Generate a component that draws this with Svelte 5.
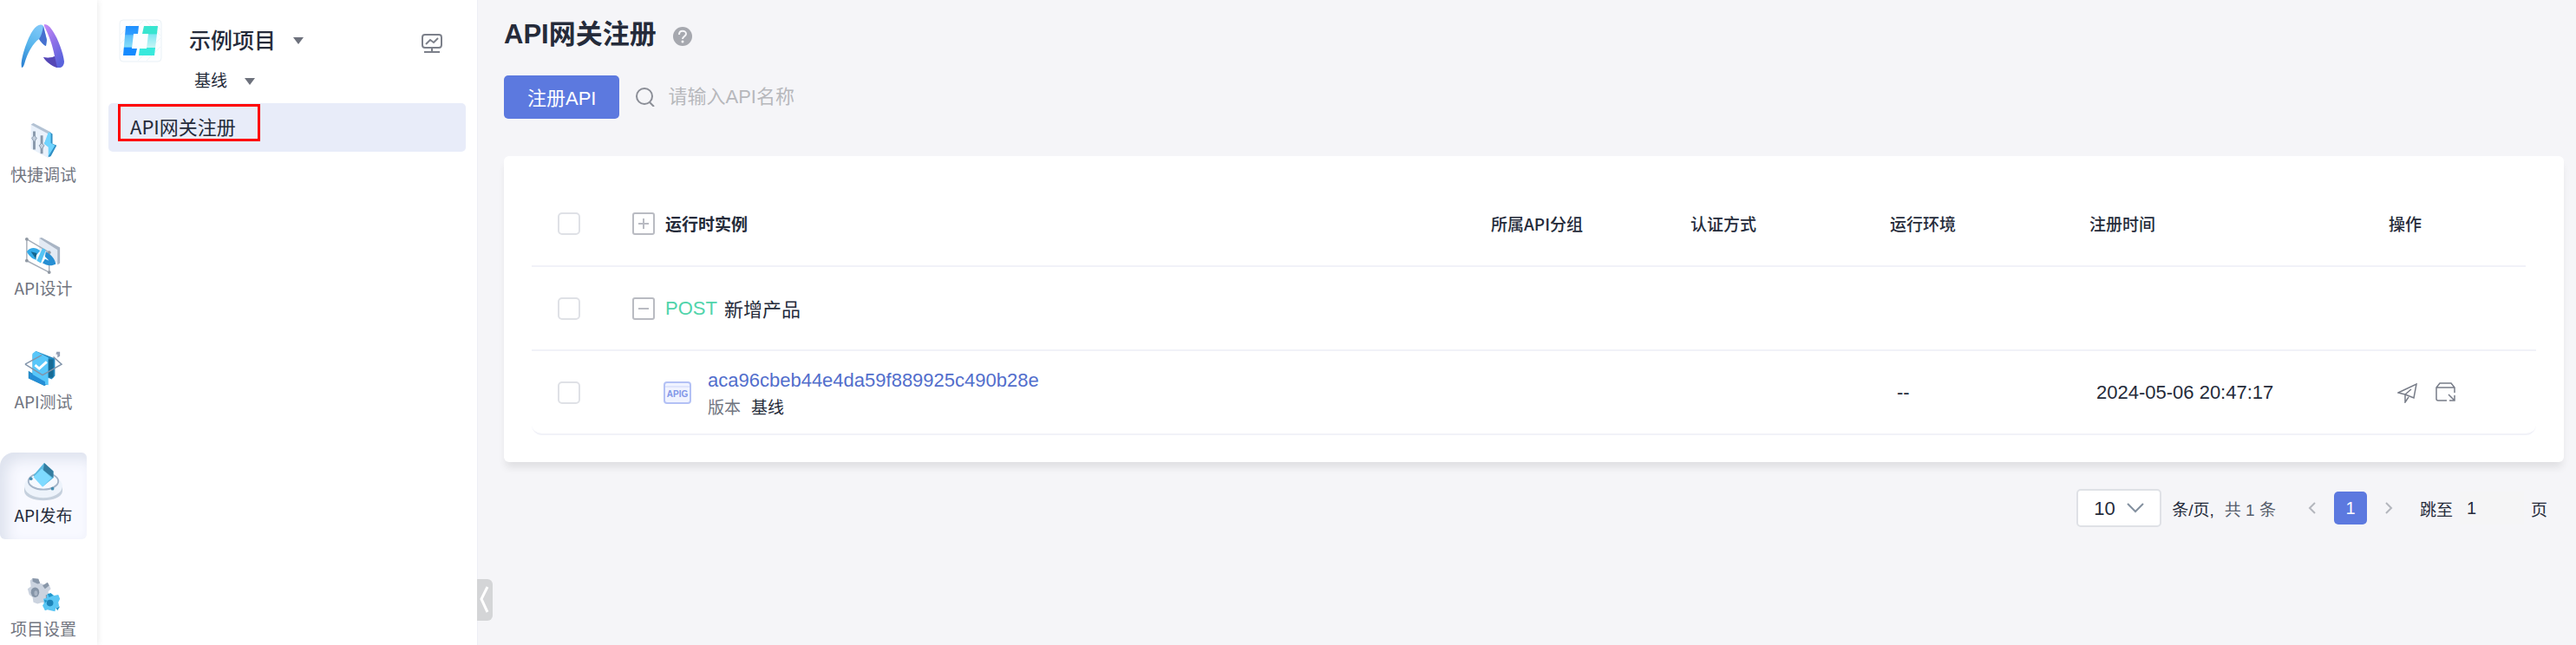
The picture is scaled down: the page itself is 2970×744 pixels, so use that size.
<script lang="ts">
	const navItems = [
		{ id: 'debug', label: '快捷调试' },
		{ id: 'design', label: 'API设计' },
		{ id: 'test', label: 'API测试' },
		{ id: 'publish', label: 'API发布' },
		{ id: 'settings', label: '项目设置' }
	];

	const instances = [
		{ id: 'aca96cbeb44e4da59f889925c490b28e', version: '基线', group: '', auth: '', env: '--', time: '2024-05-06 20:47:17' }
	];

	let activeNav = $state('publish');
	let keyword = $state('');
	let expanded = $state(true);
	let pageSize = $state('10');
	let jumpPage = $state('1');

	const visible = $derived(instances.filter((item) => item.id.includes(keyword)));
</script>

{#snippet toggle(open: boolean)}
	<svg class="toggle-icon" viewBox="0 0 26 26" fill="none" stroke="#b9bbc2" stroke-width="2">
		<rect x="1" y="1" width="24" height="24" rx="2" />
		<path d="M7 13h12" />
		{#if !open}
			<path d="M13 7v12" />
		{/if}
	</svg>
{/snippet}

<div class="layout">
	<nav class="rail" aria-label="主导航">
		<a class="brand" href="#home" aria-label="首页">
			<svg viewBox="0 0 50 50">
				<defs>
					<linearGradient id="brandBlue" x1="0.6" y1="0" x2="0.2" y2="1">
						<stop offset="0" stop-color="#7fc8f8" />
						<stop offset="0.5" stop-color="#57b5ec" />
						<stop offset="1" stop-color="#2d83d3" />
					</linearGradient>
					<linearGradient id="brandPurple" x1="0" y1="0" x2="0.6" y2="1">
						<stop offset="0" stop-color="#c98bf8" />
						<stop offset="0.5" stop-color="#9071e8" />
						<stop offset="1" stop-color="#5a63dc" />
					</linearGradient>
				</defs>
				<path d="M1 50C-1 42 7 17 14 7 18 1 23-1 26 2l4 16-1 7c-3-1-6-5-8-8C14 22 8 32 4 46c-1 3-2 4-3 4Z" fill="url(#brandBlue)" />
				<path d="M26 2l4 16-1 7c-3-1-6-5-8-8 3-4 4-9 5-15Z" fill="#4670cf" />
				<path d="M27 0c4 0 7 3 10 8 6 9 12 25 13 35 0 5-3 8-8 7-6-2-12-6-16-12 4 1 9 1 13-1C37 25 32 12 27 2Z" fill="url(#brandPurple)" />
				<path d="M26 38c4 1 9 1 13-1l3 13c-6-2-12-6-16-12Z" fill="#5547b5" />
			</svg>
		</a>
		<ul class="nav-list">
			{#each navItems as item}
				<li>
					<button class="nav-item" class:active={activeNav === item.id} onclick={() => (activeNav = item.id)}>
						<svg class="nav-icon" viewBox="0 0 46 46">
							{#if item.id === 'debug'}
								<path d="M8 3l3-2 21 11v21l-3 10L8 32Z" fill="#e9f1fb" />
								<path d="M8 3l3-2 21 11-3 2Z" fill="#b3c2d3" />
								<path d="M12 11v22M21 16v22" stroke="#8797aa" stroke-width="3" />
								<path d="M12 16l3 3-3 5-3-5ZM21 25l3 3-3 5-3-5Z" fill="#c3cfde" stroke="#8797aa" />
								<path d="M31 12l3 2v12l5 2-7 13-3 1 1-12-6-4Z" fill="#2f8fc4" />
								<path d="M29 12l3 1v12l5 3-8 13v-11l-5-4Z" fill="#6fd4ff" />
							{:else if item.id === 'design'}
								<path d="M18 3l23 14v17L18 20Z" fill="#e3eaf4" />
								<path d="M18 3l3-1 22 12v19l-3 2V17Z" fill="#a8b4c4" />
								<path d="M3 4l27 16v24L3 30Z" fill="none" stroke="#a5adb8" stroke-width="1.5" />
								<circle cx="3" cy="4" r="2" fill="#9098a3" /><circle cx="30" cy="20" r="2" fill="#9098a3" />
								<circle cx="3" cy="30" r="2" fill="#9098a3" /><circle cx="30" cy="44" r="2" fill="#9098a3" />
								<path d="M3 19c4-5 10-6 16-1l-4 5-4-1 4 7C9 28 5 23 3 19Z" fill="#35abe8" />
								<path d="M22 15l4 2-6 16-5-3Z" fill="#54c4f5" />
								<path d="M26 19c7 4 11 9 12 15-5 3-11 2-16-1l3-5 5 2-5-5Z" fill="#278fd3" />
								<path d="M8 19l7 2-1 7Z" fill="#14658e" />
							{:else if item.id === 'test'}
								<path d="M10 6l4-4 23 9v21l-4 4-5-2v8l-4 2-19-9v-9l5 3Z" fill="#248ac1" />
								<path d="M10 5l4-3 15 8v33l-4-1-15-9Z" fill="#58c7fa" />
								<path d="M29 12h6v22h-6Z" fill="#176a94" />
								<path d="M6 28l19 11v5L6 35Z" fill="#258ed6" />
								<path d="M1 18L21 7M35 9l10 9-23 13L1 18" fill="none" stroke="#8295ab" stroke-width="1.5" />
								<path d="M13 19l5 4 9-8" fill="none" stroke="#fff" stroke-width="3" />
								<path d="M39 3h4v5l-3 2V6h-2Z" fill="#96a0b4" />
							{:else if item.id === 'publish'}
								<path d="M0 29v5c1 15 45 15 46 0v-5Z" fill="#c5d0dd" />
								<ellipse cx="23" cy="28" rx="23" ry="14" fill="#edf3fb" />
								<ellipse cx="23" cy="22" rx="18" ry="10" fill="#f5f9ff" stroke="#a4b4c8" stroke-width="2" />
								<path d="M24 0l11 10v8L23 28 11 15Z" fill="#5bb8df" />
								<path d="M24 0l11 10v8l-12-9Z" fill="#347c9f" />
								<path d="M21 7l12 11-11 11-11-12Z" fill="#7edaff" />
								<circle cx="8" cy="19" r="2" fill="#468eb2" /><circle cx="34" cy="31" r="2" fill="#468eb2" />
							{:else}
								<path d="M7 5l3-3 7 1 2 5 6 2 4-2 3 7-3 3v6l3 5-5 5-5-3-6 2-5-2-1-6-4-3-2-7 4-3Z" fill="#cbd3df" />
								<path d="M10 2l7 1 2 5-3 1-6-3ZM22 11l6-4 2 4-5 4ZM26 22l6 1v4l-6 1Z" fill="#8997a9" />
								<ellipse cx="13" cy="19" rx="5" ry="6" fill="#8594a7" />
								<ellipse cx="14" cy="20" rx="2" ry="3" fill="#a9b5c5" />
								<path d="M27 22l5-2 4 3 5-1 2 5-2 4 1 5-4 2-1 4-5-1-4-1-3 1-3-6 2-3-1-5 4-1Z" fill="#5ac6f4" />
								<path d="M28 21l4-1 3 3-5 2ZM38 38l5-2-3 5ZM24 28l4 1-3 3Z" fill="#2496c9" />
								<circle cx="31" cy="32" r="4" fill="#1d84b9" />
							{/if}
						</svg>
						<span>{item.label}</span>
					</button>
				</li>
			{/each}
		</ul>
	</nav>

	<aside class="sidebar">
		<header class="project">
			<svg class="project-logo" viewBox="0 0 50 50">
				<defs>
					<linearGradient id="bracketLeft" x1="0" y1="0" x2="0" y2="1">
						<stop offset="0" stop-color="#1e90ff" />
						<stop offset="0.28" stop-color="#2f9dff" />
						<stop offset="0.32" stop-color="#5cc0fb" />
						<stop offset="0.7" stop-color="#84dcf8" />
						<stop offset="0.75" stop-color="#158bff" />
					</linearGradient>
					<linearGradient id="bracketRight" x1="0" y1="0" x2="0" y2="1">
						<stop offset="0.25" stop-color="#38e5d0" />
						<stop offset="0.3" stop-color="#82e8f3" />
						<stop offset="0.72" stop-color="#c4f5f4" />
						<stop offset="0.75" stop-color="#38e9dc" />
					</linearGradient>
				</defs>
				<rect x="1" y="1" width="48" height="48" rx="4" fill="#fcfeff" stroke="#eaf1f6" />
				<path d="M2 18L18 2M2 28L28 2M2 38L12 28M22 48l26-26M32 48l16-16M31 2l17 17M38 2l10 10" stroke="#eff5f8" fill="none" />
				<path d="M8 8h15l-1 9h-5l-2 17h6l-2 8H5Z" fill="url(#bracketLeft)" />
				<path d="M29 8h16l-4 34H23l1-8h8l2-17h-7Z" fill="url(#bracketRight)" />
			</svg>
			<div class="project-picker">
				<button class="picker project-name">
					示例项目
					<svg class="caret" viewBox="0 0 12 8"><path d="M0 0h12L6 8Z" /></svg>
				</button>
				<button class="picker branch-name">
					基线
					<svg class="caret" viewBox="0 0 12 8"><path d="M0 0h12L6 8Z" /></svg>
				</button>
			</div>
			<button class="icon-btn monitor" aria-label="监控面板">
				<svg viewBox="0 0 24 24" fill="none" stroke="#7c808a" stroke-width="2">
					<rect x="1" y="2" width="22" height="15" rx="3" />
					<path d="M5 13l5-5 4 3 5-5M12 17v5M3 22h18" />
				</svg>
			</button>
		</header>
		<a class="menu-item" href="#gateway"><span class="menu-mark">API网关注册</span></a>
		<button class="collapse" aria-label="收起侧栏">
			<svg viewBox="0 0 18 48" fill="none" stroke="#fff" stroke-width="3"><path d="M12 9L5 23l7 15" /></svg>
		</button>
	</aside>

	<main class="content">
		<div class="title-row">
			<h1>API网关注册</h1>
			<button class="icon-btn help" aria-label="帮助">
				<svg viewBox="0 0 22 22">
					<circle cx="11" cy="11" r="11" fill="#a6a8af" />
					<path d="M7 9c0-6 8-5 8-1 0 3-4 3-4 6" fill="none" stroke="#f5f5f8" stroke-width="2" />
					<circle cx="11" cy="17" r="1.5" fill="#f5f5f8" />
				</svg>
			</button>
		</div>

		<div class="toolbar">
			<button class="primary">注册API</button>
			<label class="search">
				<svg viewBox="0 0 22 22" fill="none" stroke="#8b8e97" stroke-width="2">
					<circle cx="10" cy="10" r="9" />
					<path d="M16 17l5 5" />
				</svg>
				<input type="text" placeholder="请输入API名称" aria-label="API名称" bind:value={keyword} />
			</label>
		</div>

		<section class="card">
			<table>
				<colgroup>
					<col class="col-check" />
					<col />
					<col class="col-field" />
					<col class="col-field" />
					<col class="col-field" />
					<col class="col-time" />
					<col class="col-action" />
					<col class="col-gutter" />
				</colgroup>
				<thead>
					<tr>
						<th class="check"><input type="checkbox" aria-label="全选" /></th>
						<th>
							<div class="cell">
								<button class="icon-btn" aria-label="全部展开">{@render toggle(false)}</button>
								运行时实例
							</div>
						</th>
						<th>所属API分组</th>
						<th>认证方式</th>
						<th>运行环境</th>
						<th>注册时间</th>
						<th>操作</th>
						<td class="gutter"></td>
					</tr>
				</thead>
				<tbody>
					<tr>
						<td class="check"><input type="checkbox" aria-label="选择新增产品" /></td>
						<td colspan="7">
							<div class="cell">
								<button class="icon-btn" aria-label="展开或收起" onclick={() => (expanded = !expanded)}>
									{@render toggle(expanded)}
								</button>
								<span class="method">POST</span>
								<span class="api-name">新增产品</span>
							</div>
						</td>
					</tr>
					{#if expanded}
						{#each visible as item}
							<tr>
								<td class="check"><input type="checkbox" aria-label="选择{item.id}" /></td>
								<td>
									<div class="instance">
										<svg class="apig" viewBox="0 0 32 26">
											<rect x="1" y="1" width="30" height="24" rx="3" fill="#f0f3ff" stroke="#b3c1f5" stroke-width="2" />
											<path d="M2 6h28" stroke="#cdd6fa" />
											<text x="16" y="18" text-anchor="middle">APIG</text>
										</svg>
										<div class="instance-info">
											<a href="#instance">{item.id}</a>
											<p><span class="muted">版本</span> <span>{item.version}</span></p>
										</div>
									</div>
								</td>
								<td class="value">{item.group}</td>
								<td class="value">{item.auth}</td>
								<td class="value">{item.env}</td>
								<td class="value">{item.time}</td>
								<td colspan="2">
									<div class="actions">
										<button class="icon-btn" aria-label="发布">
											<svg viewBox="0 0 24 24" fill="none" stroke="#777c88" stroke-width="1.5">
												<path d="M1 12L22 2l-3 16-10-4ZM9 14l7-6M9 14v9l4-6" />
											</svg>
										</button>
										<button class="icon-btn" aria-label="下线">
											<svg viewBox="0 0 24 24" fill="none" stroke="#777c88" stroke-width="1.5">
												<path d="M13 21H3q-2 0-2-2V6l4-5h13l4 5v6M1 6h21M15 14l6 6M22 15v6h-6" />
											</svg>
										</button>
									</div>
								</td>
							</tr>
						{/each}
					{/if}
				</tbody>
			</table>
		</section>

		<footer class="pagination">
			<div class="size-select">
				<select aria-label="每页条数" bind:value={pageSize}>
					<option>10</option>
					<option>20</option>
					<option>50</option>
				</select>
				<svg viewBox="0 0 20 12" fill="none" stroke="#83909f" stroke-width="2"><path d="M1 1l9 9 9-9" /></svg>
			</div>
			<span class="unit">条/页,</span>
			<span class="total">共 1 条</span>
			<button class="icon-btn arrow" aria-label="上一页">
				<svg viewBox="0 0 10 16" fill="none" stroke="#b3b6bd" stroke-width="2"><path d="M8 2L2 8l6 6" /></svg>
			</button>
			<button class="page" aria-current="page">1</button>
			<button class="icon-btn arrow" aria-label="下一页">
				<svg viewBox="0 0 10 16" fill="none" stroke="#b3b6bd" stroke-width="2"><path d="M2 2l6 6-6 6" /></svg>
			</button>
			<label class="jump">
				跳至
				<input type="text" bind:value={jumpPage} />
				页
			</label>
		</footer>
	</main>
</div>

<style>
	:global(body) {
		margin: 0;
	}

	.layout {
		display: grid;
		grid-template-columns: 112px 439px minmax(0, 1fr);
		grid-template-rows: 100%;
		height: 100vh;
		overflow: hidden;
		background: #f5f5f8;
		color: #252b3a;
		font-family: 'Liberation Sans', 'Noto Sans CJK SC', sans-serif;
		font-size: 22px;
	}

	button,
	input,
	select {
		font: inherit;
		color: inherit;
	}

	button {
		border: 0;
		padding: 0;
		background: none;
		cursor: pointer;
	}

	svg {
		display: block;
	}

	.icon-btn svg {
		width: 24px;
		height: 24px;
	}

	.icon-btn .toggle-icon {
		width: 26px;
		height: 26px;
	}

	.rail {
		z-index: 1;
		background: #fff;
		box-shadow: 0 0 8px rgba(0, 0, 0, 0.1);
		font-family: 'Noto Sans CJK SC', sans-serif;
	}

	.brand {
		display: block;
		margin: 28px 0 51px 24px;
		width: 50px;
	}

	.nav-list {
		display: flex;
		flex-direction: column;
		gap: 31px;
		margin: 0;
		padding: 0;
		list-style: none;
	}

	.nav-item {
		display: flex;
		flex-direction: column;
		align-items: center;
		gap: 4px;
		box-sizing: border-box;
		width: 100px;
		height: 100px;
		padding-top: 12px;
		border-radius: 6px;
		color: #71757f;
		font-size: 19px;
		line-height: 24px;
	}

	.nav-icon {
		width: 44px;
		height: 44px;
	}

	.nav-item.active {
		border-top-left-radius: 16px;
		background: #f8f9ff;
		box-shadow: inset 8px 8px 16px #dde2ee;
		color: #252b3a;
	}

	.sidebar {
		position: relative;
		background: #fff;
		border-right: 1px solid #eeeff5;
		font-family: 'Noto Sans CJK SC', sans-serif;
	}

	.project {
		display: flex;
		align-items: flex-start;
		padding: 22px 40px 0 25px;
		height: 97px;
	}

	.project-logo {
		width: 50px;
		height: 50px;
	}

	.project-picker {
		display: flex;
		flex: 1;
		flex-direction: column;
		align-items: flex-start;
		gap: 10px;
		padding-left: 31px;
	}

	.picker {
		display: flex;
		align-items: center;
		gap: 20px;
	}

	.project-name {
		font-size: 25px;
		font-weight: 500;
		line-height: 46px;
	}

	.branch-name {
		padding-left: 6px;
		font-size: 19px;
		line-height: 28px;
	}

	.caret {
		width: 12px;
		height: 8px;
		margin-top: 4px;
		fill: #6d717c;
	}

	.monitor {
		padding-top: 16px;
	}

	.menu-item {
		display: flex;
		align-items: flex-start;
		box-sizing: border-box;
		margin: 0 13px;
		height: 56px;
		padding: 1px 11px;
		border-radius: 5px;
		background: #e8ecf9;
		color: #252b3a;
		text-decoration: none;
	}

	.menu-mark {
		padding: 7px 25px 0 11px;
		border: 3px solid #f00;
		line-height: 30px;
	}

	.collapse {
		position: absolute;
		left: 100%;
		bottom: 28px;
		width: 18px;
		height: 48px;
		border-radius: 0 6px 6px 0;
		background: #d4d5d7;
	}

	.content {
		padding: 20px 14px 0 30px;
	}

	.title-row {
		display: flex;
		align-items: center;
		gap: 19px;
		height: 40px;
	}

	h1 {
		margin: 0;
		font-size: 31px;
		line-height: 40px;
	}

	.help {
		padding-top: 4px;
	}

	.help svg {
		width: 22px;
		height: 22px;
	}

	.toolbar {
		display: flex;
		align-items: center;
		gap: 19px;
		margin: 27px 0 43px;
	}

	.primary {
		height: 50px;
		padding: 0 27px 2px;
		border-radius: 5px;
		background: #5c79df;
		color: #fff;
	}

	.search {
		display: flex;
		align-items: center;
		gap: 15px;
	}

	.search svg {
		width: 22px;
		height: 22px;
	}

	.search input {
		width: 240px;
		padding: 0;
		border: 0;
		outline: 0;
		background: none;
	}

	.search input::placeholder {
		color: #b7b8bc;
	}

	.card {
		padding: 31px 32px;
		border-radius: 6px;
		background: #fff;
		box-shadow: 0 8px 10px -2px rgba(0, 0, 0, 0.09);
	}

	table {
		width: 100%;
		table-layout: fixed;
		border-collapse: separate;
		border-spacing: 0;
	}

	.col-check {
		width: 116px;
	}

	.col-field {
		width: 230px;
	}

	.col-time {
		width: 345px;
	}

	.col-action {
		width: 158px;
	}

	.col-gutter {
		width: 12px;
	}

	th,
	td {
		box-sizing: border-box;
		height: 97px;
		padding: 0;
		border-bottom: 2px solid #f1f2f8;
		text-align: left;
	}

	th {
		padding-bottom: 2px;
		font-family: 'Noto Sans CJK SC', sans-serif;
		font-size: 19px;
		font-weight: 500;
	}

	th:nth-child(2) {
		font-weight: 700;
	}

	.gutter {
		border-bottom-color: transparent;
	}

	tbody tr:last-child td:first-child {
		border-bottom-left-radius: 12px;
	}

	tbody tr:last-child td:last-child {
		border-bottom-right-radius: 12px;
	}

	.check {
		padding-left: 30px;
	}

	.check input {
		display: block;
		appearance: none;
		box-sizing: border-box;
		width: 26px;
		height: 26px;
		margin: 0;
		border: 2px solid #dfe1e6;
		border-radius: 5px;
		background: #fff;
	}

	.check input:checked {
		background: #5c79df;
	}

	.cell {
		display: flex;
		align-items: center;
	}

	.cell .icon-btn {
		margin-right: 12px;
	}

	.method {
		color: #50d4ab;
	}

	.api-name {
		padding: 0 0 2px 8px;
	}

	.instance {
		display: flex;
		align-items: center;
		gap: 19px;
		padding-left: 36px;
	}

	.apig {
		width: 32px;
		height: 26px;
	}

	.apig text {
		fill: #8196e8;
		font-size: 10px;
		font-weight: 700;
	}

	.instance-info {
		padding-top: 4px;
	}

	.instance-info a {
		color: #526ecc;
		line-height: 32px;
		text-decoration: none;
	}

	.instance-info p {
		display: flex;
		gap: 12px;
		margin: 0;
		font-size: 19px;
		line-height: 32px;
	}

	.muted {
		color: #71757f;
	}

	.value {
		padding-left: 8px;
	}

	.actions {
		display: flex;
		gap: 20px;
		padding-left: 10px;
	}

	.pagination {
		display: flex;
		align-items: center;
		justify-content: flex-end;
		margin-top: 31px;
		padding-right: 19px;
		font-size: 19px;
	}

	.size-select {
		display: grid;
		align-items: center;
		width: 98px;
		height: 44px;
		font-size: 22px;
	}

	.size-select select,
	.size-select svg {
		grid-area: 1 / 1;
	}

	.size-select select {
		appearance: none;
		height: 100%;
		padding: 0 18px;
		border: 2px solid #dfe1e6;
		border-radius: 5px;
		background: #fff;
	}

	.size-select svg {
		justify-self: end;
		width: 20px;
		height: 12px;
		margin-right: 20px;
		pointer-events: none;
	}

	.unit {
		margin: 0 12px;
	}

	.total {
		color: #575d6c;
	}

	.arrow {
		padding: 0 20px;
	}

	.arrow svg {
		width: 10px;
		height: 16px;
	}

	.total + .arrow {
		padding-left: 37px;
	}

	.page {
		width: 38px;
		height: 38px;
		border-radius: 5px;
		background: #5c79df;
		color: #fff;
		font-size: 20px;
	}

	.jump {
		display: flex;
		align-items: center;
		gap: 8px;
		padding-left: 11px;
	}

	.jump input {
		box-sizing: border-box;
		width: 74px;
		height: 38px;
		padding: 0 8px;
		border: 0;
		background: #f5f5f6;
		font-size: 20px;
	}
</style>
